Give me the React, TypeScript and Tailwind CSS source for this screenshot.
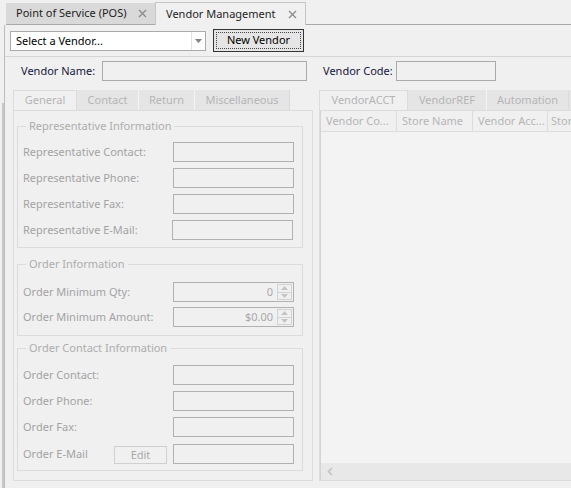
import React from "react";

function XIcon() {
  return (
    <svg width="9" height="9" viewBox="0 0 9 9" className="shrink-0">
      <path d="M1 1L8 8M8 1L1 8" stroke="#8c8c8c" strokeWidth="1.4" />
    </svg>
  );
}

function Field({ className = "" }: { className?: string }) {
  return <div className={`h-[20px] w-[121px] shrink-0 border border-[#b1b1b1] bg-[#f0f0f0] ${className}`} />;
}

function Spin({ value }: { value: string }) {
  return (
    <div className="flex h-[20px] w-[121px] shrink-0 border border-[#b1b1b1] bg-[#f0f0f0]">
      <div className="flex flex-1 items-center justify-end pr-[4px] text-[#a9a9a9]">{value}</div>
      <div className="my-[1px] mr-[1px] flex w-[15px] flex-col border border-[#d2d2d2]">
        <div className="flex flex-1 items-center justify-center border-b border-[#d2d2d2]">
          <svg width="7" height="4" viewBox="0 0 7 4"><path d="M0 4L3.5 0L7 4Z" fill="#c4c4c4" /></svg>
        </div>
        <div className="flex flex-1 items-center justify-center">
          <svg width="7" height="4" viewBox="0 0 7 4"><path d="M0 0L3.5 4L7 0Z" fill="#c4c4c4" /></svg>
        </div>
      </div>
    </div>
  );
}

function Row({ label, children }: { label: string; children: React.ReactNode }) {
  return (
    <div className="flex h-[20px] items-center justify-between">
      <span className="text-[#a3a3a3]">{label}</span>
      {children}
    </div>
  );
}

function Group({
  title,
  children,
  className = "",
}: {
  title: string;
  children: React.ReactNode;
  className?: string;
}) {
  return (
    <fieldset className={`ml-[3px] w-[286px] border border-[#dcdcdc] pl-[5px] pr-[8px] ${className}`}>
      <legend className="ml-[3px] h-[16px] px-[3px] leading-[16px] text-[#adadad]">{title}</legend>
      {children}
    </fieldset>
  );
}

export default function App() {
  return (
    <div className="flex h-[488px] w-[571px] flex-col overflow-hidden bg-[#f0f0f0] font-['Noto_Sans',sans-serif] text-[11px] text-[#1e1e1e]">
      {/* document tabs */}
      <div className="flex h-[25px] shrink-0 items-end pl-[6px]">
        <div className="flex h-[22px] w-[149px] items-center justify-between border-b border-[#a9a9a9] bg-[#d9d9d9] pl-[10px] pr-[8px]">
          <span>Point of Service (POS)</span>
          <XIcon />
        </div>
        <div className="flex h-[23px] w-[151px] items-center justify-between border-l border-r border-t border-[#c6c6c6] bg-[#f0f0f0] pl-[10px] pr-[8px]">
          <span>Vendor Management</span>
          <XIcon />
        </div>
        <div className="h-full flex-1 border-b border-[#a9a9a9]" />
      </div>

      <div className="flex min-h-0 flex-1">
        <div className="w-[4px] shrink-0">
          <div className="ml-[2px] mt-[78px] h-full w-[2px] bg-[#c6c6c6]" />
        </div>
        <div className="flex min-w-0 flex-1 flex-col border-l border-[#bdbdbd]">
          {/* toolbar */}
          <div className="flex h-[32px] shrink-0 items-start border-b border-[#d5d5d5] pl-[5px] pt-[4px]">
            <div className="mt-[2px] flex h-[20px] w-[196px] items-center border border-[#aaaaaa] bg-white">
              <span className="flex-1 pl-[5px] text-black">Select a Vendor...</span>
              <div className="flex h-full w-[14px] items-center justify-center border-l border-[#e2e2e2]">
                <svg width="7" height="4" viewBox="0 0 7 4"><path d="M0 0L3.5 4L7 0Z" fill="#808080" /></svg>
              </div>
            </div>
            <div className="ml-[7px] flex h-[23px] w-[91px] items-center justify-center border border-[#333333] bg-[#e5e5e5] p-[2px]">
              <div className="flex h-full w-full items-center justify-center border border-dotted border-[#444444] text-black">
                New Vendor
              </div>
            </div>
          </div>

          {/* vendor name / code */}
          <div className="flex shrink-0 items-center pl-[16px] pt-[4px]">
            <span className="w-[81px] text-[#16163a]">Vendor Name:</span>
            <div className="h-[20px] w-[205px] border border-[#aaaaaa] bg-[#f0f0f0]" />
            <span className="ml-[16px] w-[73px] text-[#16163a]">Vendor Code:</span>
            <div className="h-[20px] w-[100px] border border-[#aaaaaa] bg-[#f0f0f0]" />
          </div>

          {/* tab controls */}
          <div className="mt-[9px] flex min-h-0 flex-1 pl-[8px]">
            {/* left tabs */}
            <div className="flex w-[300px] shrink-0 flex-col">
              <div className="flex h-[20px] text-[#b5b5b5]">
                <div className="flex w-[64px] items-center justify-center border-l border-r border-t border-[#dcdcdc] bg-[#f0f0f0]">General</div>
                <div className="flex w-[61px] items-center justify-center bg-[#e5e5e5]">Contact</div>
                <div className="flex w-[56px] items-center justify-center border-l border-[#f4f4f4] bg-[#e5e5e5]">Return</div>
                <div className="flex w-[96px] items-center justify-center border-l border-r border-l-[#f4f4f4] border-r-[#d9d9d9] bg-[#e5e5e5]">Miscellaneous</div>
              </div>
              <div className="h-[371px] border border-[#dcdcdc] bg-[#f0f0f0]">
                <Group title="Representative Information" className="mt-[7px] pb-[7px]">
                  <div className="mt-[8px] flex flex-col gap-[6px]">
                    <Row label="Representative Contact:"><Field /></Row>
                    <Row label="Representative Phone:"><Field /></Row>
                    <Row label="Representative Fax:"><Field /></Row>
                    <Row label="Representative E-Mail:"><Field className="mr-[1px]" /></Row>
                  </div>
                </Group>
                <Group title="Order Information" className="mt-[8px] pb-[8px]">
                  <div className="mt-[10px] flex flex-col gap-[5px]">
                    <Row label="Order Minimum Qty:"><Spin value="0" /></Row>
                    <Row label="Order Minimum Amount:"><Spin value="$0.00" /></Row>
                  </div>
                </Group>
                <Group title="Order Contact Information" className="mt-[4px] pb-[6px]">
                  <div className="mt-[9px] flex flex-col">
                    <Row label="Order Contact:"><Field /></Row>
                    <div className="mt-[6px]"><Row label="Order Phone:"><Field /></Row></div>
                    <div className="mt-[6px]"><Row label="Order Fax:"><Field /></Row></div>
                    <div className="mt-[7px] flex h-[20px] items-center">
                      <span className="w-[91px] text-[#a3a3a3]">Order E-Mail</span>
                      <div className="mt-[2px] flex h-[18px] w-[53px] items-center justify-center border border-[#d0d0d0] bg-[#f0f0f0] text-[#a9a9a9]">
                        Edit
                      </div>
                      <div className="flex-1" />
                      <Field />
                    </div>
                  </div>
                </Group>
              </div>
            </div>

            {/* right tabs */}
            <div className="ml-[6px] flex min-w-0 flex-1 flex-col overflow-hidden">
              <div className="flex h-[20px] text-[#b5b5b5]">
                <div className="flex w-[89px] shrink-0 items-center justify-center border-l border-r border-t border-[#dcdcdc] bg-[#f0f0f0]">VendorACCT</div>
                <div className="flex w-[78px] shrink-0 items-center justify-center bg-[#e5e5e5]">VendorREF</div>
                <div className="flex w-[83px] shrink-0 items-center justify-center border-l border-r border-l-[#f4f4f4] border-r-[#d9d9d9] bg-[#e5e5e5]">Automation</div>
                <div className="w-[60px] shrink-0 bg-[#e5e5e5]" />
              </div>
              <div className="flex h-[371px] flex-col border-b border-l border-t border-[#dcdcdc] pt-0">
                <div className="flex min-h-0 flex-1 flex-col border-l border-[#d4d4d4]">
                  <div className="flex h-[21px] shrink-0 border-b border-[#dcdcdc] bg-[#f0f0f0] text-[#b5b5b5]">
                    <div className="flex w-[76px] shrink-0 items-center border-r border-[#dcdcdc] pl-[5px]">Vendor Co...</div>
                    <div className="flex w-[76px] shrink-0 items-center border-r border-[#dcdcdc] pl-[5px]">Store Name</div>
                    <div className="flex w-[75px] shrink-0 items-center border-r border-[#dcdcdc] pl-[5px]">Vendor Acc...</div>
                    <div className="flex w-[80px] shrink-0 items-center pl-[3px] whitespace-nowrap">Store Number</div>
                  </div>
                  <div className="min-h-0 flex-1 bg-[#f3f3f3]" />
                  <div className="flex h-[17px] shrink-0 items-center bg-[#e8e8e8] pl-[6px]">
                    <svg width="6" height="9" viewBox="0 0 6 9">
                      <path d="M5 1L1.5 4.5L5 8" stroke="#c2c2c2" strokeWidth="1.6" fill="none" />
                    </svg>
                  </div>
                </div>
              </div>
            </div>
          </div>
        </div>
      </div>
    </div>
  );
}
